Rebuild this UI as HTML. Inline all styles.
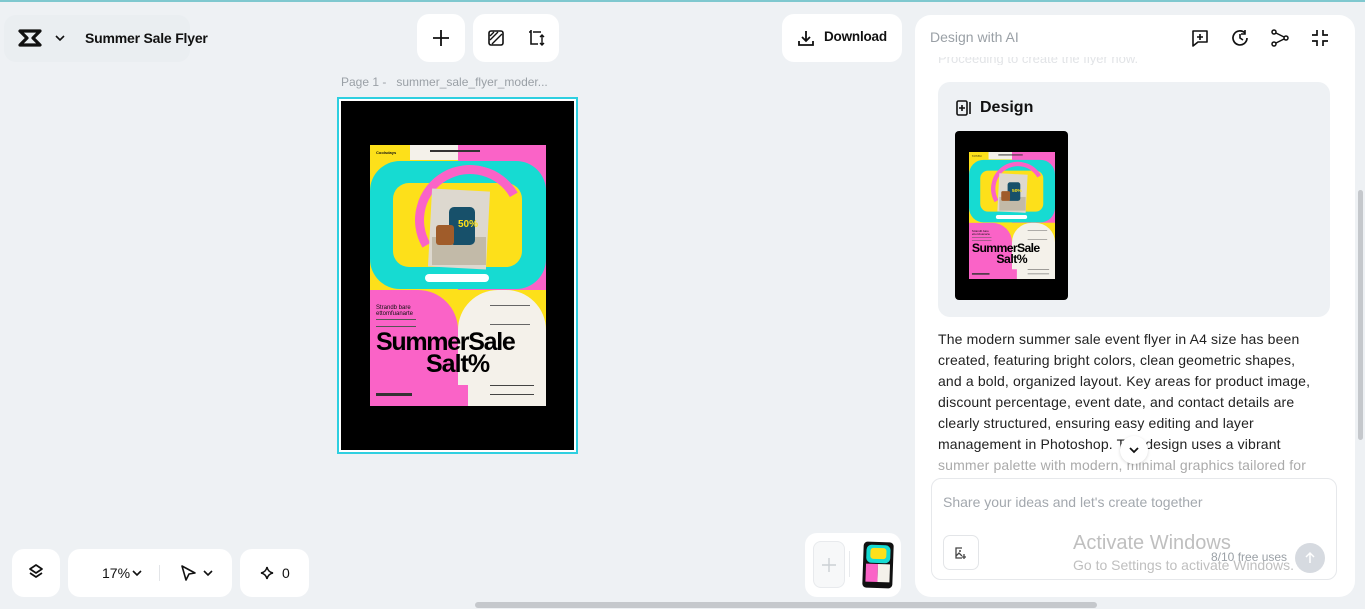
<!DOCTYPE html>
<html><head><meta charset="utf-8">
<style>
*{box-sizing:border-box;margin:0;padding:0}
body{width:1365px;height:609px;overflow:hidden;background:#eef1f4;font-family:"Liberation Sans",sans-serif;position:relative;color:#111}
.abs{position:absolute}
.card{position:absolute;background:#fff;border-radius:12px}
svg{display:block}
.fl{position:absolute;width:176px;height:261px;overflow:hidden;background:#fde01a;transform-origin:0 0}
.fl div{position:absolute}
</style></head><body>
<div class="abs" style="left:0;top:0;width:1365px;height:2px;background:#7fc8cf"></div>

<div class="abs" style="left:4px;top:15px;width:186px;height:47px;background:#eaeef1;border-radius:12px"></div>
<svg class="abs" style="left:18px;top:28px" width="24" height="20" viewBox="0 0 24 20"><path d="M2 3h20l-7 7 7 7H2l7-7z" fill="none" stroke="#111" stroke-width="3.2" stroke-linejoin="round"/></svg>
<svg class="abs" style="left:54px;top:33px" width="12" height="10" viewBox="0 0 12 10"><path d="M2 3l4 4 4-4" fill="none" stroke="#111" stroke-width="1.6"/></svg>
<div class="abs" style="left:85px;top:30px;font-size:14px;font-weight:bold;color:#111;letter-spacing:-0.2px">Summer Sale Flyer</div>

<div class="card" style="left:417px;top:14px;width:48px;height:48px"></div>
<svg class="abs" style="left:431px;top:28px" width="20" height="20" viewBox="0 0 20 20"><path d="M10 2v16M2 10h16" stroke="#111" stroke-width="1.8"/></svg>
<div class="card" style="left:473px;top:14px;width:86px;height:48px"></div>
<svg class="abs" style="left:487px;top:29px" width="18" height="18" viewBox="0 0 18 18"><rect x="2" y="2" width="14" height="14" rx="2" fill="none" stroke="#111" stroke-width="1.6"/><path d="M3 11L11 3M5 15L15 5M3 7l4-4" stroke="#111" stroke-width="1.4"/></svg>
<svg class="abs" style="left:526px;top:28px" width="20" height="20" viewBox="0 0 20 20"><path d="M5 2v2H3M5 4v12h7M15 4h-8" fill="none" stroke="#111" stroke-width="1.6"/><path d="M16 7v10M14 9l2-2 2 2M14 15l2 2 2-2" fill="none" stroke="#111" stroke-width="1.4"/></svg>

<div class="card" style="left:782px;top:14px;width:120px;height:48px"></div>
<svg class="abs" style="left:797px;top:29px" width="18" height="18" viewBox="0 0 18 18"><path d="M9 2v10M5 8l4 4 4-4M2 12v4h14v-4" fill="none" stroke="#111" stroke-width="1.8"/></svg>
<div class="abs" style="left:824px;top:29px;font-size:13.5px;font-weight:bold;color:#111;letter-spacing:-0.2px">Download</div>

<div class="abs" style="left:341px;top:75px;font-size:12px;color:#9aa0a6">Page 1 -&nbsp;&nbsp; summer_sale_flyer_moder...</div>

<div class="abs" style="left:337px;top:97px;width:241px;height:357px;border:2px solid #2ecfe0;background:#fff;padding:2px"><div style="width:100%;height:100%;background:#000"></div></div>

<div class="fl" id="f1" style="left:370px;top:145px">
 <div style="left:0;top:0;width:88px;height:145px;background:#fde01a"></div>
 <div style="left:40px;top:0;width:48px;height:15px;background:#f4f1ea"></div>
 <div style="left:88px;top:0;width:88px;height:145px;background:#fa63c7"></div>
 <div style="left:6px;top:5px;font-size:4px;font-weight:bold">Coolsdays</div>
 <div style="left:60px;top:5px;width:50px;height:2px;background:#333"></div>
 <div style="left:0;top:16px;width:176px;height:128px;background:#16dbd2;border-radius:30px"></div>
 <div style="left:23px;top:38px;width:129px;height:84px;background:#fde01a;border-radius:16px"></div>
 <div style="left:45px;top:20px;width:110px;height:110px;border:9px solid transparent;border-top-color:#fa63c7;border-left-color:#fa63c7;border-radius:50%;transform:rotate(15deg)"></div>
 <div style="left:60px;top:45px;width:58px;height:78px;background:#ddd8cf;transform:rotate(3deg)"></div>
 <div style="left:62px;top:92px;width:54px;height:28px;background:#c2baa8"></div>
 <div style="left:79px;top:62px;width:26px;height:38px;background:#17506a;border-radius:5px"></div>
 <div style="left:66px;top:80px;width:18px;height:20px;background:#a05c2a;border-radius:3px"></div>
 <div style="left:88px;top:74px;font-size:10px;font-weight:bold;color:#fde01a">50%</div>
 <div style="left:55px;top:129px;width:64px;height:8px;background:#fff;border-radius:4px"></div>
 <div style="left:0;top:145px;width:88px;height:116px;background:#fa63c7;border-radius:0 40px 0 0"></div>
 <div style="left:88px;top:145px;width:88px;height:116px;background:#fde01a"></div>
 <div style="left:88px;top:145px;width:88px;height:116px;background:#f4f1ea;border-radius:40px 40px 0 0"></div>
 <div style="left:88px;top:240px;width:10px;height:21px;background:#fa63c7"></div>
 <div style="left:6px;top:160px;font-size:6px;line-height:6px">Strandb bare<br>ettomfuanarte</div>
 <div style="left:6px;top:174px;width:40px;height:8px;border-top:1px solid #555;border-bottom:1px solid #555"></div>
 <div style="left:120px;top:160px;width:40px;height:20px;border-top:1px solid #666;border-bottom:1px solid #666"></div>
 <div style="left:6px;top:186px;font-size:25px;font-weight:bold;letter-spacing:-1.3px;line-height:22px;color:#000">SummerSale</div>
 <div style="left:56px;top:208px;font-size:25px;font-weight:bold;letter-spacing:-1px;line-height:22px;color:#000">Salt%</div>
 <div style="left:6px;top:248px;width:36px;height:3px;background:#333"></div>
 <div style="left:120px;top:240px;width:44px;height:10px;border-top:1px solid #444;border-bottom:1px solid #444"></div>
</div>

<div class="card" style="left:915px;top:15px;width:440px;height:582px;border-radius:16px"></div>
<div class="abs" style="left:1358px;top:190px;width:5px;height:250px;background:#c5c8cc;border-radius:3px"></div>
<div class="abs" style="left:930px;top:29px;font-size:14px;color:#9aa0a6">Design with AI</div>
<svg class="abs" style="left:1190px;top:28px" width="20" height="20" viewBox="0 0 20 20"><path d="M3 3h14v11H8l-5 4z" fill="none" stroke="#111" stroke-width="1.6" stroke-linejoin="round"/><path d="M10 6v6M7 9h6" stroke="#111" stroke-width="1.6"/></svg>
<svg class="abs" style="left:1230px;top:28px" width="20" height="20" viewBox="0 0 20 20"><path d="M17 10a7 7 0 1 1-2-5" fill="none" stroke="#111" stroke-width="1.7"/><path d="M10 6v4l3 2M15 2v4h-4" fill="none" stroke="#111" stroke-width="1.6"/></svg>
<svg class="abs" style="left:1270px;top:28px" width="20" height="20" viewBox="0 0 20 20"><circle cx="4" cy="4" r="2" fill="none" stroke="#111" stroke-width="1.5"/><circle cx="4" cy="16" r="2" fill="none" stroke="#111" stroke-width="1.5"/><circle cx="16" cy="10" r="2" fill="none" stroke="#111" stroke-width="1.5"/><path d="M6 5l8 4M6 15l8-4" stroke="#111" stroke-width="1.5"/></svg>
<svg class="abs" style="left:1310px;top:28px" width="20" height="20" viewBox="0 0 20 20"><path d="M7 2v5H2M13 2v5h5M7 18v-5H2M13 18v-5h5" fill="none" stroke="#111" stroke-width="1.7"/></svg>
<div class="abs" style="left:938px;top:57px;height:8px;overflow:hidden"><div style="font-size:13px;color:#e2e4e7;margin-top:-6px">Proceeding to create the flyer now.</div></div>

<div class="abs" style="left:938px;top:82px;width:392px;height:235px;background:#eef1f4;border-radius:12px"></div>
<svg class="abs" style="left:955px;top:99px" width="18" height="18" viewBox="0 0 18 18"><rect x="2" y="2" width="10" height="14" rx="1.5" fill="none" stroke="#111" stroke-width="1.6"/><path d="M7 6v6M4 9h6M15 3v12" stroke="#111" stroke-width="1.6"/></svg>
<div class="abs" style="left:980px;top:99px;font-size:16px;font-weight:bold;color:#111">Design</div>
<div class="abs" style="left:955px;top:131px;width:113px;height:169px;background:#000;border-radius:4px"></div>
<div id="thumb" class="abs" style="left:969px;top:152px;width:86px;height:127px;overflow:hidden"></div>

<div class="abs" style="left:938px;top:329px;width:374px;font-size:14px;line-height:21px;color:#222;letter-spacing:0.15px">The modern summer sale event flyer in A4 size has been created, featuring bright colors, clean geometric shapes, and a bold, organized layout. Key areas for product image, discount percentage, event date, and contact details are clearly structured, ensuring easy editing and layer management in Photoshop. The design uses a vibrant <span style="color:#aaa">summer palette with modern, minimal graphics tailored for</span></div>
<div class="abs" style="left:1120px;top:436px;width:28px;height:28px;border-radius:50%;background:#fff;box-shadow:0 1px 3px rgba(0,0,0,.15)"></div>
<svg class="abs" style="left:1128px;top:445px" width="12" height="10" viewBox="0 0 12 10"><path d="M2 3l4 4 4-4" fill="none" stroke="#111" stroke-width="1.8"/></svg>

<div class="abs" style="left:931px;top:478px;width:406px;height:102px;background:#fff;border:1px solid #e6e8eb;border-radius:10px"></div>
<div class="abs" style="left:943px;top:494px;font-size:14px;color:#a3a8ae">Share your ideas and let's create together</div>
<div class="abs" style="left:943px;top:535px;width:36px;height:35px;border:1px solid #e3e5e8;border-radius:7px"></div>
<svg class="abs" style="left:953px;top:545px" width="16" height="16" viewBox="0 0 16 16"><path d="M9 3H3v10h6M3 11l3-3 3 3M11 9v5M9 12h4" fill="none" stroke="#444" stroke-width="1.3"/><circle cx="7" cy="6" r="1" fill="#444"/></svg>
<div class="abs" style="left:1073px;top:532px;font-size:20px;color:#bfbfbf">Activate Windows</div>
<div class="abs" style="left:1073px;top:557px;font-size:14px;color:#bfbfbf">Go to Settings to activate Windows.</div>
<div class="abs" style="left:1211px;top:550px;font-size:12px;color:#9aa0a6">8/10 free uses</div>
<div class="abs" style="left:1295px;top:543px;width:30px;height:30px;border-radius:50%;background:#d6dae0"></div>
<svg class="abs" style="left:1303px;top:551px" width="14" height="14" viewBox="0 0 14 14"><path d="M7 12V2M3 6l4-4 4 4" fill="none" stroke="#fff" stroke-width="1.5"/></svg>

<div class="card" style="left:12px;top:549px;width:48px;height:48px"></div>
<svg class="abs" style="left:27px;top:563px" width="18" height="18" viewBox="0 0 18 18"><path d="M9 2l6 4-6 4-6-4z M3 10l6 4 6-4" fill="none" stroke="#111" stroke-width="1.7" stroke-linejoin="round"/></svg>
<div class="card" style="left:68px;top:549px;width:164px;height:48px"></div>
<div class="abs" style="left:102px;top:565px;font-size:14px;color:#111">17%</div>
<svg class="abs" style="left:131px;top:568px" width="12" height="10" viewBox="0 0 12 10"><path d="M2 3l4 4 4-4" fill="none" stroke="#111" stroke-width="1.6"/></svg>
<div class="abs" style="left:159px;top:565px;width:1px;height:16px;background:#e3e5e8"></div>
<svg class="abs" style="left:179px;top:564px" width="18" height="18" viewBox="0 0 18 18"><path d="M3 2l13 7-6 1-3 6z" fill="none" stroke="#111" stroke-width="1.6" stroke-linejoin="round"/></svg>
<svg class="abs" style="left:202px;top:568px" width="12" height="10" viewBox="0 0 12 10"><path d="M2 3l4 4 4-4" fill="none" stroke="#111" stroke-width="1.6"/></svg>
<div class="card" style="left:240px;top:549px;width:69px;height:48px"></div>
<svg class="abs" style="left:260px;top:566px" width="14" height="14" viewBox="0 0 14 14"><path d="M7 1Q8 6 13 7Q8 8 7 13Q6 8 1 7Q6 6 7 1z" fill="none" stroke="#111" stroke-width="1.5"/></svg>
<div class="abs" style="left:282px;top:565px;font-size:14px;color:#111">0</div>

<div class="card" style="left:805px;top:533px;width:96px;height:64px"></div>
<div class="abs" style="left:813px;top:541px;width:32px;height:47px;border:1px solid #e8eaed;border-radius:8px;background:#f7f8f9"></div>
<svg class="abs" style="left:820px;top:556px" width="18" height="18" viewBox="0 0 18 18"><path d="M9 2v14M2 9h14" stroke="#ccd0d4" stroke-width="1.4"/></svg>
<div class="abs" style="left:849px;top:551px;width:1px;height:26px;background:#e8eaed"></div>
<div class="abs" style="left:863px;top:542px;width:30px;height:46px;background:#111;border-radius:4px;overflow:hidden;transform:rotate(2deg)">
 <div style="position:absolute;left:3px;top:3px;width:24px;height:18px;background:#16dbd2;border-radius:5px"></div>
 <div style="position:absolute;left:7px;top:6px;width:16px;height:11px;background:#fde01a;border-radius:3px"></div>
 <div style="position:absolute;left:3px;top:22px;width:12px;height:18px;background:#fa63c7"></div>
 <div style="position:absolute;left:15px;top:22px;width:12px;height:18px;background:#f4f1ea"></div>
</div>

<div class="abs" style="left:475px;top:602px;width:622px;height:6px;background:#c5c8cc;border-radius:3px"></div>

<script>
var f=document.getElementById('f1').cloneNode(true);
f.id='';f.style.left='0';f.style.top='0';f.style.transform='scale(0.4886)';
document.getElementById('thumb').appendChild(f);
</script>
</body></html>
